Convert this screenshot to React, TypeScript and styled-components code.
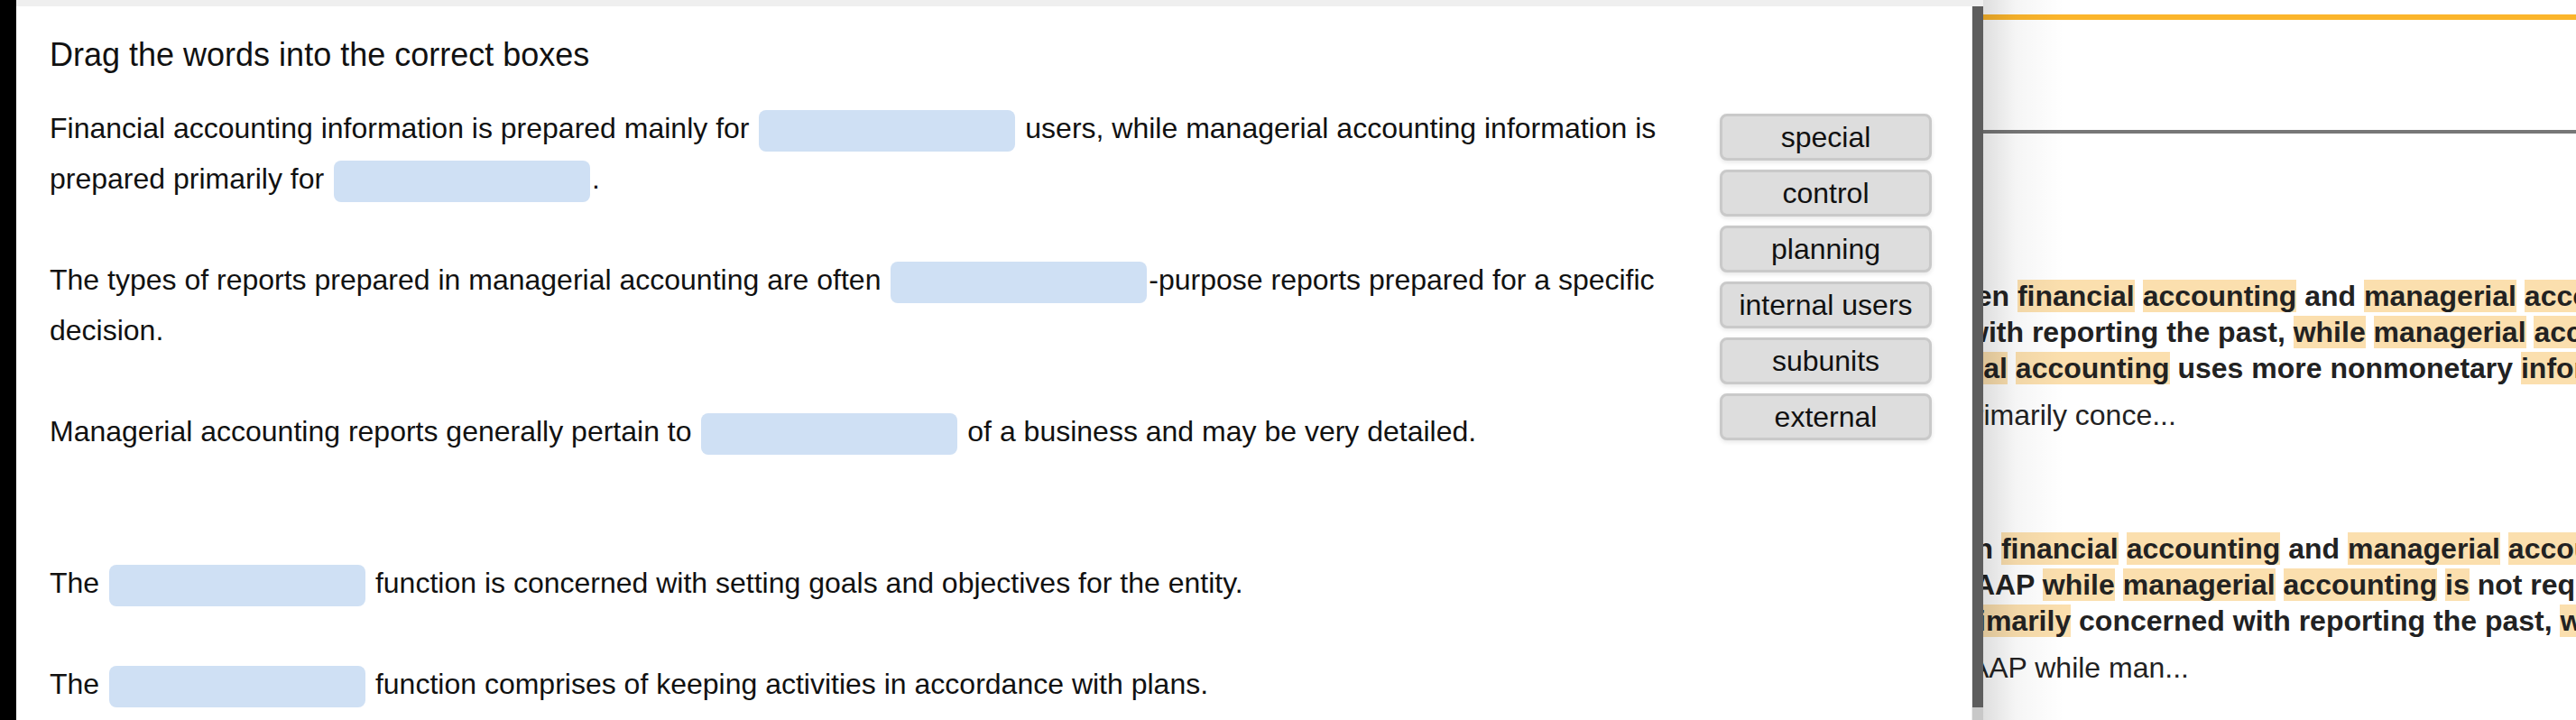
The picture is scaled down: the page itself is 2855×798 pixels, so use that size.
import React from "react";
import styled, { createGlobalStyle } from "styled-components";

const GlobalStyle = createGlobalStyle`
  html, body {
    margin: 0;
    padding: 0;
    background: #fff;
  }
  body {
    font-family: "Liberation Sans", Arial, Helvetica, sans-serif;
  }
`;

const Screen = styled.div`
  display: flex;
  width: 2855px;
  height: 798px;
  overflow: hidden;
  background: #fff;
`;

const Rail = styled.div`
  flex: 0 0 18px;
  background: #000;
`;

const Drawer = styled.div`
  flex: 0 0 2180px;
  display: flex;
  flex-direction: column;
`;

const TopStrip = styled.div`
  flex: 0 0 7px;
  background: #efefef;
`;

const DrawerBody = styled.div`
  flex: 1;
  display: flex;
  min-height: 0;
`;

const Panel = styled.div`
  flex: 1;
  display: flex;
  flex-direction: column;
  padding: 0 44px 0 37px;
  background: #fff;
  border-right: 1px solid #ececec;
`;

const Scrollbar = styled.div`
  flex: 0 0 12px;
  display: flex;
  flex-direction: column;
`;

const ScrollThumb = styled.div`
  flex: 1;
  background: #5d5d5d;
`;

const ScrollTrack = styled.div`
  flex: 0 0 14px;
  background: #c8c8c8;
`;

const Heading = styled.h2`
  margin: 33px 0 32px;
  font-size: 36px;
  font-weight: 400;
  line-height: 42px;
  color: #111;
`;

const Exercise = styled.div`
  display: flex;
  align-items: flex-start;
  gap: 40px;
`;

const Sentences = styled.div`
  flex: 1;
  min-width: 0;
  font-size: 32px;
  line-height: 56px;
  color: #111;
`;

const Sentence = styled.p<{ $extraGap?: boolean }>`
  margin: ${({ $extraGap }) => ($extraGap ? "112px" : "0")} 0 56px;
`;

const Blank = styled.span`
  display: inline-block;
  width: 284px;
  height: 46px;
  margin: 0 2px;
  border-radius: 8px;
  background: #cfe0f4;
  vertical-align: middle;
`;

const WordBank = styled.div`
  flex: 0 0 235px;
  display: flex;
  flex-direction: column;
  gap: 10px;
  padding-top: 12px;
`;

const WordChip = styled.div`
  box-sizing: border-box;
  height: 52px;
  display: flex;
  align-items: center;
  justify-content: center;
  border: 3px solid #c9c9c9;
  border-radius: 8px;
  background: #dddddd;
  box-shadow: 0 2px 5px rgba(0, 0, 0, 0.1);
  font-size: 32px;
  color: #111;
`;

const Page = styled.div`
  flex: 1;
  position: relative;
  overflow: hidden;
  background: #fff;

  &::after {
    content: "";
    position: absolute;
    top: 0;
    bottom: 0;
    left: 0;
    width: 90px;
    background: linear-gradient(to right, rgba(0, 0, 0, 0.13), rgba(0, 0, 0, 0.04) 40%, rgba(0, 0, 0, 0));
    pointer-events: none;
  }
`;

const AccentRule = styled.div`
  height: 6px;
  margin-top: 16px;
  background: #fbb52b;
`;

const DividerRule = styled.div`
  height: 4px;
  margin-top: 122px;
  background: #777;
`;

const ResultGroup = styled.div<{ $top: number }>`
  margin-top: ${({ $top }) => $top}px;
`;

const SnippetLine = styled.div<{ $shift: number; $summary?: boolean }>`
  margin-left: ${({ $shift }) => $shift}px;
  margin-top: ${({ $summary }) => ($summary ? "12px" : "0")};
  white-space: nowrap;
  font-size: 32px;
  font-weight: ${({ $summary }) => ($summary ? 400 : 700)};
  line-height: 40px;
  color: #222;
`;

const Mark = styled.mark`
  background: #fbdfae;
  color: inherit;
`;

// [word] marks a highlighted search term
const renderSnippet = (text: string) =>
  text.split(/(\[[^\]]+\])/).map((part, i) =>
    part.startsWith("[") ? <Mark key={i}>{part.slice(1, -1)}</Mark> : part
  );

interface Snippet {
  shift: number;
  text: string;
  summary?: boolean;
}

const results: { top: number; lines: Snippet[] }[] = [
  {
    top: 160,
    lines: [
      { shift: -99, text: "between [financial] [accounting] and [managerial] [accounting] is that" },
      { shift: -19, text: "with reporting the past, [while] [managerial] [accounting] focuses on the future" },
      { shift: -142, text: "[managerial] [accounting] uses more nonmonetary [information] than financial" },
      { shift: -28, text: "primarily conce...", summary: true },
    ],
  },
  {
    top: 108,
    lines: [
      { shift: -117, text: "between [financial] [accounting] and [managerial] [accounting] is that" },
      { shift: -35, text: "GAAP [while] [managerial] [accounting] [is] not required to follow GAAP" },
      { shift: -38, text: "[primarily] concerned with reporting the past, [while] managerial" },
      { shift: -40, text: "GAAP while man...", summary: true },
    ],
  },
];

const words = ["special", "control", "planning", "internal users", "subunits", "external"];

const App = () => {
  return (
    <>
      <GlobalStyle />
      <Screen>
        <Rail />
        <Drawer>
          <TopStrip />
          <DrawerBody>
            <Panel>
              <Heading>Drag the words into the correct boxes</Heading>
              <Exercise>
                <Sentences>
                  <Sentence>
                    Financial accounting information is prepared mainly for <Blank /> users, while
                    managerial accounting information is prepared primarily for <Blank />.
                  </Sentence>
                  <Sentence>
                    The types of reports prepared in managerial accounting are often <Blank />
                    -purpose reports prepared for a specific decision.
                  </Sentence>
                  <Sentence>
                    Managerial accounting reports generally pertain to <Blank /> of a business and may
                    be very detailed.
                  </Sentence>
                  <Sentence $extraGap>
                    The <Blank /> function is concerned with setting goals and objectives for the
                    entity.
                  </Sentence>
                  <Sentence>
                    The <Blank /> function comprises of keeping activities in accordance with plans.
                  </Sentence>
                </Sentences>
                <WordBank>
                  {words.map((word) => (
                    <WordChip key={word}>{word}</WordChip>
                  ))}
                </WordBank>
              </Exercise>
            </Panel>
            <Scrollbar>
              <ScrollThumb />
              <ScrollTrack />
            </Scrollbar>
          </DrawerBody>
        </Drawer>
        <Page>
          <AccentRule />
          <DividerRule />
          {results.map((group, g) => (
            <ResultGroup key={g} $top={group.top}>
              {group.lines.map((line, i) => (
                <SnippetLine key={i} $shift={line.shift} $summary={line.summary}>
                  {renderSnippet(line.text)}
                </SnippetLine>
              ))}
            </ResultGroup>
          ))}
        </Page>
      </Screen>
    </>
  );
};

export default App;
